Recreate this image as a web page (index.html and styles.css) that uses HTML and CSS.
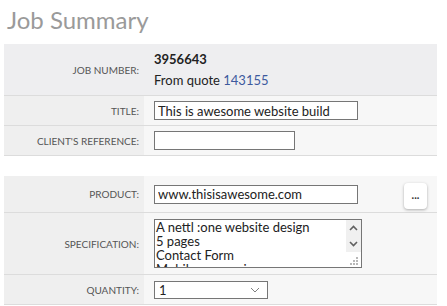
FILE: index.html
```html
<!DOCTYPE html>
<html>

<head>
  <meta charset="UTF-8">
  <title>Job Summary</title>
  <link rel="stylesheet" href="styles.css">
</head>

<body>
  <h2 class="heading">Job Summary</h2>

  <table class="summary">
    <tr class="first">
      <th>Job Number:</th>
      <td>
        <div class="job-no">3956643</div>
        <div>From quote <a href="#">143155</a></div>
      </td>
    </tr>
    <tr class="row-input">
      <th>Title:</th>
      <td><input type="text" class="field wide" value="This is awesome website build"></td>
    </tr>
    <tr class="row-input">
      <th>Client's Reference:</th>
      <td><input type="text" class="field short" value=""></td>
    </tr>
  </table>

  <table class="summary second">
    <tr class="row-product">
      <th>Product:</th>
      <td>
        <div class="product-line">
          <input type="text" class="field wide" value="www.thisisawesome.com">
          <button class="more">...</button>
        </div>
      </td>
    </tr>
    <tr class="row-spec">
      <th>Specification:</th>
      <td>
        <div class="spec-box">
          <textarea class="spec">A nettl :one website design
5 pages
Contact Form
Mobile responsive</textarea>
          <div class="spec-bar">
            <span class="arrow">
              <svg width="9" height="6" viewBox="0 0 9 6"><path d="M1 5 L4.5 1.5 L8 5" fill="none" stroke="#606060" stroke-width="1.6"/></svg>
            </span>
            <span class="arrow">
              <svg width="9" height="6" viewBox="0 0 9 6"><path d="M1 1 L4.5 4.5 L8 1" fill="none" stroke="#606060" stroke-width="1.6"/></svg>
            </span>
            <span class="grip">
              <svg width="15" height="15" viewBox="0 0 15 15">
                <g fill="#b8b8b8">
                  <rect x="10" y="5" width="2" height="2"/>
                  <rect x="7" y="8" width="2" height="2"/>
                  <rect x="10" y="8" width="2" height="2"/>
                  <rect x="4" y="11" width="2" height="2"/>
                  <rect x="7" y="11" width="2" height="2"/>
                  <rect x="10" y="11" width="2" height="2"/>
                </g>
              </svg>
            </span>
          </div>
        </div>
      </td>
    </tr>
    <tr class="row-input">
      <th>Quantity:</th>
      <td>
        <select class="qty">
          <option>1</option>
          <option>2</option>
        </select>
      </td>
    </tr>
  </table>
</body>

</html>
```
FILE: styles.css
```css
body {
  margin: 0;
  padding: 0 10px 0 4px;
  font-family: Lato, 'Liberation Sans', sans-serif;
  font-size: 13px;
  color: #222;
  background: #fff;
}

.heading {
  font-size: 24px;
  font-weight: normal;
  color: #9a9a9a;
  margin: 0 0 0 3px;
  height: 44px;
  line-height: 40px;
}

.summary {
  width: 433px;
  border-collapse: collapse;
  table-layout: fixed;
}

.summary th {
  width: 135px;
  padding: 0 5px 0 0;
  text-align: right;
  text-transform: uppercase;
  font-size: 10px;
  font-weight: normal;
  color: #555;
  background: #efefef;
  border-bottom: 1px solid #dcdcdc;
  vertical-align: middle;
}

.summary td {
  padding: 0 0 0 10px;
  background: #f7f7f7;
  border-bottom: 1px solid #dcdcdc;
  vertical-align: middle;
}

.first td {
  background: #eeeef0;
  height: 51px;
  line-height: 21px;
}

.first th {
  background: #eeeef0;
}

.job-no {
  font-weight: bold;
}

a {
  color: #3d5a9e;
  text-decoration: none;
}

.row-input td {
  height: 29px;
}

.second {
  margin-top: 20px;
}

.row-product td {
  height: 36px;
}

.row-spec td {
  height: 61px;
}

.field {
  box-sizing: border-box;
  height: 19px;
  border: 1px solid #767676;
  padding: 0 3px;
  font-family: Lato, 'Liberation Sans', sans-serif;
  font-size: 13px;
  color: #222;
  background: #fff;
  vertical-align: middle;
}

.wide {
  width: 204px;
}

.short {
  width: 141px;
}

.product-line {
  display: flex;
  align-items: center;
  gap: 46px;
}

.more {
  width: 23px;
  height: 26px;
  padding: 0 0 4px;
  border: none;
  border-radius: 4px;
  background: #fff;
  box-shadow: 0 1px 3px rgba(0, 0, 0, 0.3);
  font-family: Lato, 'Liberation Sans', sans-serif;
  font-size: 11px;
  font-weight: bold;
  color: #333;
  margin-top: 4px;
}

.spec-box {
  box-sizing: border-box;
  display: flex;
  width: 208px;
  height: 49px;
  border: 1px solid #767676;
  background: #fff;
}

.spec {
  flex: 1;
  min-width: 0;
  border: none;
  outline: none;
  padding: 0 1px;
  margin: 0;
  font-family: Lato, 'Liberation Sans', sans-serif;
  font-size: 13px;
  line-height: 14px;
  color: #222;
  resize: none;
  overflow: hidden;
}

.spec-bar {
  width: 15px;
  display: flex;
  flex-direction: column;
}

.arrow {
  height: 17px;
  background: #f0f0f0;
  display: flex;
  align-items: center;
  justify-content: center;
}

.grip {
  flex: 1;
  display: flex;
  align-items: flex-end;
}

.qty {
  box-sizing: border-box;
  width: 114px;
  height: 18px;
  border: 1px solid #767676;
  border-radius: 0;
  padding: 0 20px 0 4px;
  font-family: Lato, 'Liberation Sans', sans-serif;
  font-size: 13px;
  color: #222;
  display: block;
  appearance: none;
  -webkit-appearance: none;
  background: #fff url("data:image/svg+xml;utf8,<svg xmlns='http://www.w3.org/2000/svg' width='10' height='6'><path d='M1 1 L5 5 L9 1' fill='none' stroke='%23808080' stroke-width='1'/></svg>") no-repeat right 7px center;
}
```
